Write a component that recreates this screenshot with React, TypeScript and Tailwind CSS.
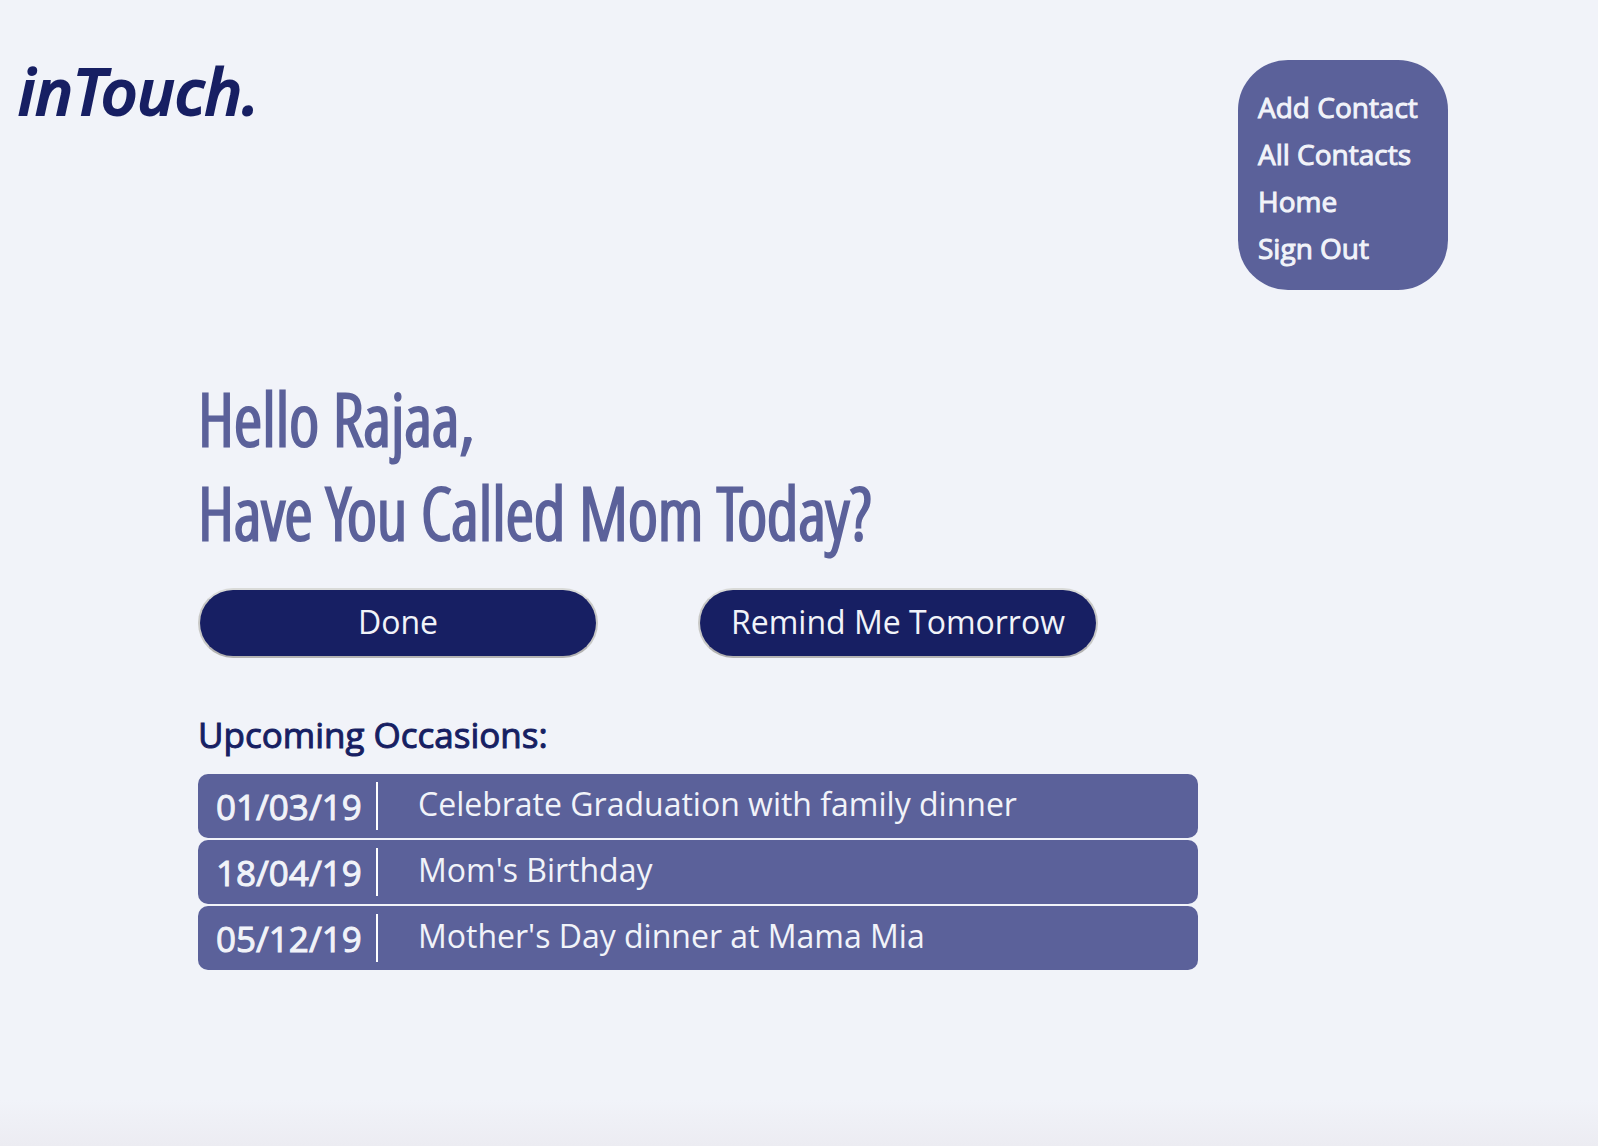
const links = ["Add Contact", "All Contacts", "Home", "Sign Out"];

const occasions = [
  { date: "01/03/19", title: "Celebrate Graduation with family dinner" },
  { date: "18/04/19", title: "Mom's Birthday" },
  { date: "05/12/19", title: "Mother's Day dinner at Mama Mia" },
];

function Header() {
  return (
    <header className="flex items-start justify-between pt-[60px] pr-[150px] pl-[18px]">
      <a
        href="#home"
        className="font-['Noto_Sans','Open_Sans',sans-serif] text-[64px] leading-[62px] font-medium text-[#171f63] italic [-webkit-text-stroke:2px_#171f63]"
      >
        inTouch.
      </a>
      <nav className="w-[210px] rounded-[50px] bg-[#5b619a] px-5 pt-6 pb-[18px]">
        <ul>
          {links.map((label) => (
            <li key={label}>
              <a
                href="#menu"
                className="block text-[28px] leading-[47px] whitespace-nowrap text-[#f1f3f9] [-webkit-text-stroke:1px_#f1f3f9]"
              >
                {label}
              </a>
            </li>
          ))}
        </ul>
      </nav>
    </header>
  );
}

function ActionButton({ label }: { label: string }) {
  return (
    <button
      type="button"
      className="h-[70px] w-[400px] rounded-[35px] border-2 border-t-[#d9dad8] border-r-[#c8c8c6] border-b-[#b4b3b2] border-l-[#c8c8c6] bg-[#171f63] pb-0.5 text-[32px] text-[#f1f3f9]"
    >
      {label}
    </button>
  );
}

export default function App() {
  return (
    <div className="flex min-h-screen flex-col bg-[#f1f3f9] font-['Open_Sans',sans-serif]">
      <Header />
      <main className="w-full max-w-[1198px] flex-1 pt-[81px] pl-[198px]">
        <h1 className="font-['Open_Sans_Condensed_Light','Roboto_Condensed',sans-serif] text-[72px] leading-[94px] whitespace-nowrap text-[#5b619a] [-webkit-text-stroke:3px_#5b619a]">
          Hello Rajaa,
          <br />
          Have You Called Mom Today?
        </h1>
        <div className="mt-[29px] flex gap-[100px]">
          <ActionButton label="Done" />
          <ActionButton label="Remind Me Tomorrow" />
        </div>
        <h2 className="mt-[51px] text-[35px] leading-[52px] text-[#171f63] [-webkit-text-stroke:1px_#171f63]">
          Upcoming Occasions:
        </h2>
        <ul className="mt-[13px] flex flex-col gap-0.5">
          {occasions.map(({ date, title }) => (
            <li
              key={date}
              className="flex h-16 items-center rounded-[10px] bg-[#5b619a] text-[#f1f3f9]"
            >
              <span className="ml-[18px] flex h-12 w-[162px] items-center border-r-2 border-white pt-0.5 text-[35px] [-webkit-text-stroke:1px_#f1f3f9]">
                {date}
              </span>
              <span className="pb-1 pl-10 text-[32px]">{title}</span>
            </li>
          ))}
        </ul>
      </main>
      <div className="h-[46px] bg-linear-to-b from-[#f1f3f9] to-[#ececf2]" />
    </div>
  );
}
